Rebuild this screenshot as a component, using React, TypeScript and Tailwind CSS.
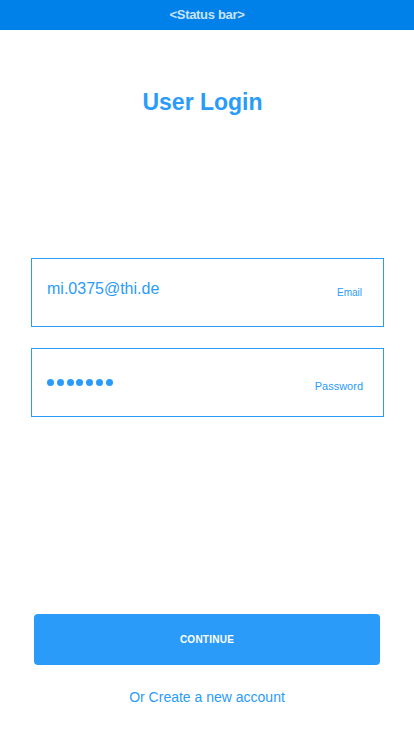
const font = { fontFamily: '"Liberation Sans", Arial, sans-serif' };

export default function App() {
  return (
    <div className="w-[414px] h-[736px] bg-white flex flex-col" style={font}>
      <div className="h-[30px] bg-[#0080e9] flex items-center justify-center">
        <span className="text-[13px] font-bold text-[#c9e3fb] tracking-tight">
          {"<Status bar>"}
        </span>
      </div>

      <h1 className="mt-[59px] pr-[9px] text-center text-[23px] leading-[26px] font-bold text-[#2a9bf9]">
        User Login
      </h1>

      <div className="mt-[143px] ml-[31px] w-[353px] flex flex-col gap-[21px]">
        <div className="h-[69px] border border-[#2a9bf9] flex items-center justify-between pl-[15px] pr-[21px]">
          <span className="text-[16px] leading-[18px] text-[#2a9bf9] -mt-[7px]">
            mi.0375@thi.de
          </span>
          <span className="text-[10px] leading-[12px] text-[#2a9bf9]">Email</span>
        </div>
        <div className="h-[69px] border border-[#2a9bf9] flex items-center justify-between pl-[15px] pr-[20px]">
          <div className="flex gap-[2.8px]">
            {Array.from({ length: 7 }).map((_, i) => (
              <span key={i} className="w-[7px] h-[7px] rounded-full bg-[#2a9bf9]" />
            ))}
          </div>
          <span className="text-[11px] leading-[12px] text-[#2a9bf9] mt-[6px]">
            Password
          </span>
        </div>
      </div>

      <button className="mt-[197px] mx-[34px] h-[51px] rounded-[4px] bg-[#2a9bf9] text-white text-[10px] font-bold tracking-wide">
        CONTINUE
      </button>

      <a className="mt-[24px] text-center text-[14px] leading-[16px] text-[#2a9bf9]">
        Or Create a new account
      </a>
    </div>
  );
}
